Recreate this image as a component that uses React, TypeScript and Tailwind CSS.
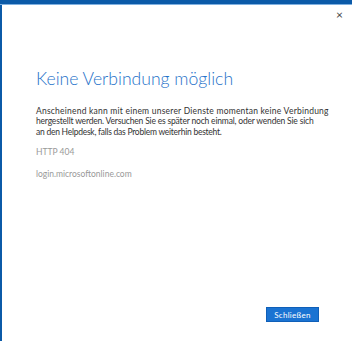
export default function App() {
  return (
    <div className="w-[352px] h-[341px] bg-white relative overflow-hidden flex flex-col" style={{ fontFamily: 'Lato, "Noto Sans", sans-serif' }}>
      <div className="h-[4px] bg-[#0b5aa8] shrink-0" />
      <div className="h-[1px] bg-[#7fb0e0] shrink-0" />
      <div className="flex flex-1">
        <div className="w-[2px] bg-[#0b5aa8] shrink-0" />
        <div className="flex-1 flex flex-col relative">
          <div className="flex justify-end pr-[9px] pt-[4px]">
            <span className="text-[12px] leading-[12px] text-[#444]">×</span>
          </div>
          <div className="pl-[34px] pr-[10px] pt-[47px]">
            <h1 className="text-[17.6px] leading-[22px] font-light text-[#2672c9]">Keine Verbindung möglich</h1>
            <div className="mt-[16px] text-[8.5px] leading-[10.3px] text-[#333]">
              <div className="whitespace-nowrap w-fit tracking-[0.22px]">Anscheinend kann mit einem unserer Dienste momentan keine Verbindung</div>
              <div className="whitespace-nowrap w-fit tracking-[-0.18px]">hergestellt werden. Versuchen Sie es später noch einmal, oder wenden Sie sich</div>
              <div className="whitespace-nowrap w-fit tracking-[-0.25px]">an den Helpdesk, falls das Problem weiterhin besteht.</div>
            </div>
            <p className="mt-[10px] text-[8.5px] leading-[10.3px] text-[#999]">HTTP 404</p>
            <p className="mt-[12px] text-[8.5px] leading-[10.3px] text-[#999]">login.microsoftonline.com</p>
          </div>
          <div className="flex-1" />
          <div className="flex justify-end pr-[33px] pb-[19px]">
            <button className="w-[53px] h-[15px] bg-[#1a73d2] border border-[#0f5fb8] text-white text-[8px] leading-none tracking-[0.3px]">Schließen</button>
          </div>
        </div>
      </div>
    </div>
  );
}
